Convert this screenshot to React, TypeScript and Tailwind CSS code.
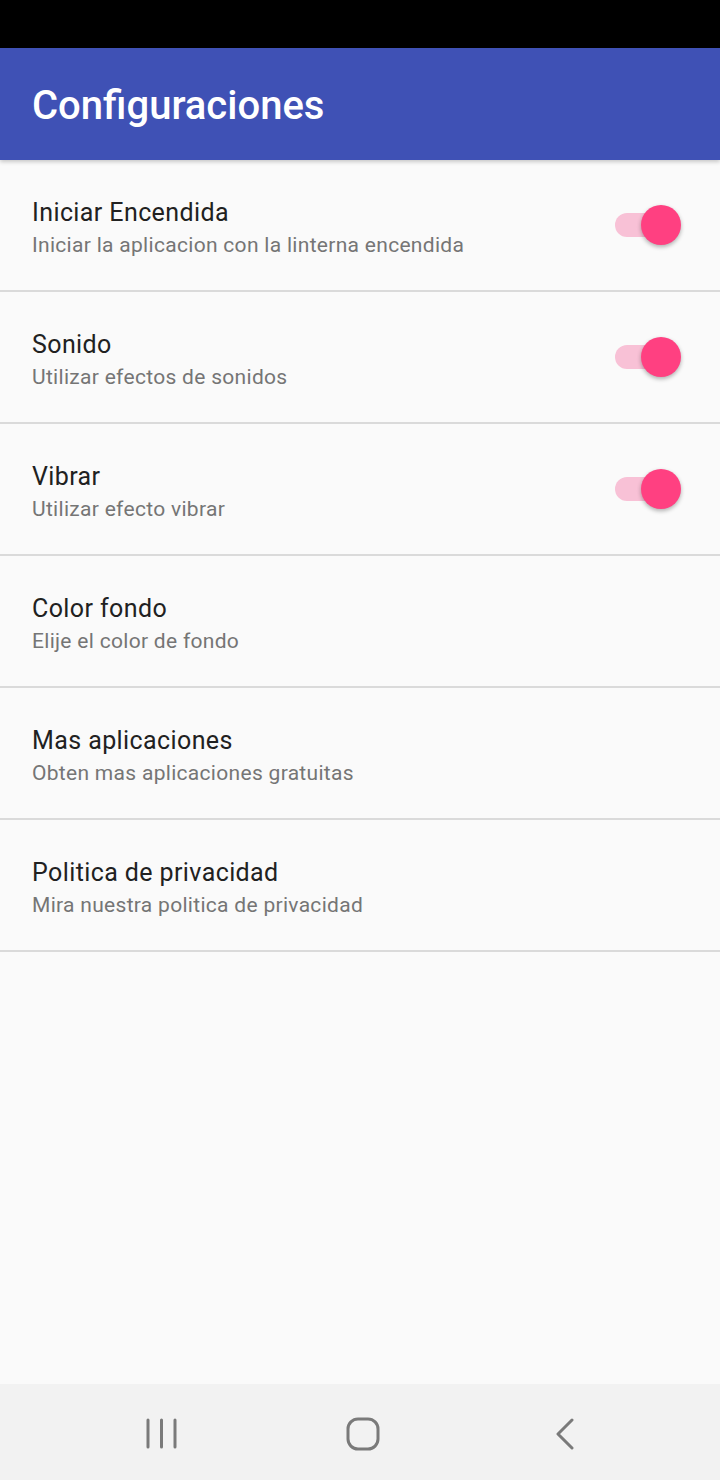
import React from 'react';

const items = [
  { title: 'Iniciar Encendida', desc: 'Iniciar la aplicacion con la linterna encendida', toggle: true },
  { title: 'Sonido', desc: 'Utilizar efectos de sonidos', toggle: true },
  { title: 'Vibrar', desc: 'Utilizar efecto vibrar', toggle: true },
  { title: 'Color fondo', desc: 'Elije el color de fondo', toggle: false },
  { title: 'Mas aplicaciones', desc: 'Obten mas aplicaciones gratuitas', toggle: false },
  { title: 'Politica de privacidad', desc: 'Mira nuestra politica de privacidad', toggle: false },
];

function Switch() {
  return (
    <div className="relative w-[66px] h-[40px] flex items-center">
      <div className="absolute left-0 right-[10px] h-[24px] rounded-full bg-[#f8c1d6]" />
      <div className="absolute right-0 w-[40px] h-[40px] rounded-full bg-[#ff4081] shadow-[0_2px_4px_rgba(0,0,0,0.3)]" />
    </div>
  );
}

export default function App() {
  return (
    <div className="w-[720px] h-[1480px] flex flex-col bg-[#fafafa] font-['Roboto',sans-serif]">
      <div className="h-[48px] bg-black" />
      <header className="h-[112px] bg-[#3f51b5] flex items-center px-[32px] pt-[4px] shadow-[0_2px_4px_rgba(0,0,0,0.2)] z-10">
        <h1 className="text-white text-[40px] font-medium leading-none">Configuraciones</h1>
      </header>

      <main className="flex-1 flex flex-col">
        {items.map((it) => (
          <div key={it.title} className="h-[132px] flex items-center pl-[32px] pr-[39px] border-b-2 border-[#dadada]">
            <div className="flex-1 flex flex-col pt-[8px]">
              <span className="text-[25px] leading-[32px] tracking-[0.4px] text-[#212121]">{it.title}</span>
              <span className="text-[21px] leading-[32px] tracking-[0.3px] text-[#757575]">{it.desc}</span>
            </div>
            {it.toggle && <Switch />}
          </div>
        ))}
      </main>

      <nav className="h-[96px] bg-[#f2f2f2] grid grid-cols-3 items-center pt-[4px]">
        <div className="flex justify-center pl-[84px]">
          <svg width="32" height="32" viewBox="0 0 32 32">
            <g stroke="#7a7a7a" strokeWidth="3" strokeLinecap="round">
              <line x1="2" y1="2" x2="2" y2="29" />
              <line x1="15.5" y1="2" x2="15.5" y2="29" />
              <line x1="29" y1="2" x2="29" y2="29" />
            </g>
          </svg>
        </div>
        <div className="flex justify-center pl-[6px]">
          <svg width="34" height="34" viewBox="0 0 34 34">
            <rect x="2" y="2" width="30" height="30" rx="10" fill="none" stroke="#7a7a7a" strokeWidth="3" />
          </svg>
        </div>
        <div className="flex justify-center pr-[70px]">
          <svg width="20" height="32" viewBox="0 0 20 32">
            <polyline points="17,2 3,16 17,30" fill="none" stroke="#7a7a7a" strokeWidth="3" strokeLinecap="round" strokeLinejoin="round" />
          </svg>
        </div>
      </nav>
    </div>
  );
}
